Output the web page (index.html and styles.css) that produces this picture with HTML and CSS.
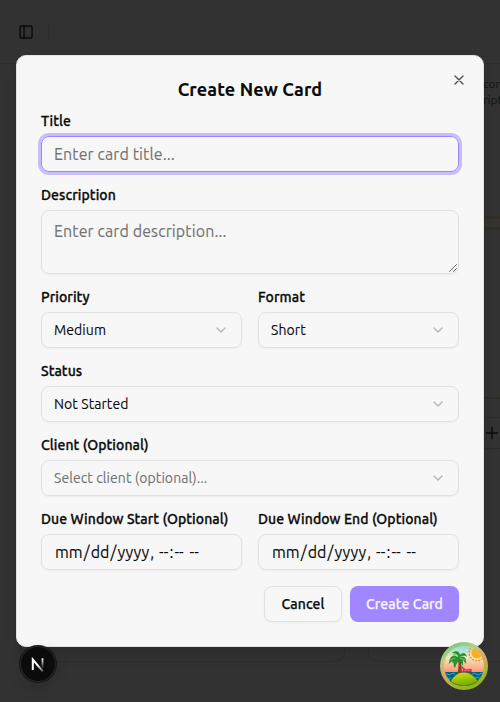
FILE: index.html
```html
<!DOCTYPE html>
<html lang="en">
<head>
<meta charset="utf-8">
<title>Create New Card</title>
<link rel="stylesheet" href="styles.css">
</head>
<body>
<div class="page" aria-hidden="true">
  <header class="topbar">
    <svg class="panel-icon" viewBox="0 0 24 24"><rect x="3" y="3" width="18" height="18" rx="2"/><path d="M9 3v18"/></svg>
    <span class="divider"></span>
  </header>
  <div class="column column-a"></div>
  <div class="column column-b"></div>
  <div class="side-text">con<br>ript</div>
  <div class="band"></div>
  <div class="rule"></div>
  <div class="add-row"><svg viewBox="0 0 16 16"><path d="M8 2.5v11M2.5 8h11"/></svg></div>
</div>
<main class="dialog">
  <svg class="close" viewBox="0 0 24 24"><path d="M18 6 6 18M6 6l12 12"/></svg>
  <h1>Create New Card</h1>
  <div class="field">
    <label>Title</label>
    <div class="control focused large">Enter card title...</div>
  </div>
  <div class="field">
    <label>Description</label>
    <div class="control area large">Enter card description...
      <svg class="grip" viewBox="0 0 8 8"><path d="M.5 7.5l7-7M4.5 7.5l3-3"/></svg>
    </div>
  </div>
  <div class="row">
    <div class="field">
      <label>Priority</label>
      <div class="control">Medium<svg class="chevron" viewBox="0 0 24 24"><path d="m6 9 6 6 6-6"/></svg></div>
    </div>
    <div class="field">
      <label>Format</label>
      <div class="control">Short<svg class="chevron" viewBox="0 0 24 24"><path d="m6 9 6 6 6-6"/></svg></div>
    </div>
  </div>
  <div class="field">
    <label>Status</label>
    <div class="control">Not Started<svg class="chevron" viewBox="0 0 24 24"><path d="m6 9 6 6 6-6"/></svg></div>
  </div>
  <div class="field">
    <label>Client (Optional)</label>
    <div class="control muted">Select client (optional)...<svg class="chevron" viewBox="0 0 24 24"><path d="m6 9 6 6 6-6"/></svg></div>
  </div>
  <div class="row">
    <div class="field">
      <label>Due Window Start (Optional)</label>
      <div class="control date"><div><span>mm</span>/<span>dd</span>/<span>yyyy</span>, <span>--</span>:<span>--</span> <span>--</span></div></div>
    </div>
    <div class="field">
      <label>Due Window End (Optional)</label>
      <div class="control date"><div><span>mm</span>/<span>dd</span>/<span>yyyy</span>, <span>--</span>:<span>--</span> <span>--</span></div></div>
    </div>
  </div>
  <div class="actions">
    <button class="cancel">Cancel</button>
    <button class="create">Create Card</button>
  </div>
</main>
<div class="next-badge">
  <svg viewBox="0 0 36 36">
    <defs>
      <linearGradient id="stem" x1="0" y1="0" x2="0" y2="1"><stop offset="0" stop-color="#fff"/><stop offset="1" stop-color="#fff" stop-opacity="0"/></linearGradient>
      <linearGradient id="slash" gradientUnits="userSpaceOnUse" x1="19" y1="18" x2="25" y2="26"><stop offset="0" stop-color="#fff"/><stop offset="1" stop-color="#fff" stop-opacity=".15"/></linearGradient>
    </defs>
    <path d="M12.8 24V13.6L22.8 25.4" fill="none" stroke="url(#slash)" stroke-width="2"/>
    <rect x="21.6" y="12.3" width="1.8" height="10.5" fill="url(#stem)"/>
  </svg>
</div>
<div class="island">
  <svg viewBox="0 0 48 48">
    <defs>
      <linearGradient id="ring" x1=".2" y1="0" x2=".65" y2="1"><stop offset="0" stop-color="#68c979"/><stop offset=".25" stop-color="#b5cf7e"/><stop offset=".5" stop-color="#dca66c"/><stop offset=".75" stop-color="#b0b43a"/><stop offset="1" stop-color="#86b51d"/></linearGradient>
      <linearGradient id="sky" x1="0" y1="0" x2="0" y2="1"><stop offset=".06" stop-color="#82dce9"/><stop offset=".32" stop-color="#f5e6bd"/><stop offset=".52" stop-color="#ffb48d"/><stop offset=".72" stop-color="#ff7075"/></linearGradient>
      <linearGradient id="sand" x1=".2" y1="0" x2=".6" y2="1"><stop offset="0" stop-color="#dce000"/><stop offset="1" stop-color="#67a800"/></linearGradient>
      <clipPath id="scene"><circle cx="24" cy="24" r="20"/></clipPath>
    </defs>
    <circle cx="24" cy="24" r="24" fill="url(#ring)"/>
    <g clip-path="url(#scene)">
      <path d="M0 0h48v48H0z" fill="url(#sky)"/>
      <circle cx="37" cy="10.8" r="5.6" fill="#ffad19"/>
      <circle cx="37" cy="10.8" r="8" fill="none" stroke="#f58a23" stroke-width="1.3" stroke-dasharray="1 2.2"/>
      <path d="M0 30h48v18H0z" fill="#075f7c"/>
      <path d="M3 32q2-2 4 0t4 0 4 0M32 32q2-2 4 0t4 0 4 0M3 36q2-2 4 0t4 0M35 36q2-2 4 0t4 0" fill="none" stroke="#1bb8c9" stroke-width="1"/>
      <path d="M17 32c2-6 2-11 0-17l3-1c1 7 2 12 2 18z" fill="#8a451d"/>
      <path d="M17.8 15C13 11 9 15 9 22l3-3 1 3 3-5c-3 5-3 7-1 9 1-4 3-6 4-8l4 6v-6l3 4c1-6-2-9-6-7 4-2 6-1 7 0-1-5-5-5-7-2 0-4-5-5-8-2 3 0 5 1 6 3z" fill="#249236"/>
      <path d="m10 18 5-2m2-3-4-1m7 4 5 2" stroke="#74c83c" stroke-width="1" fill="none"/>
      <path d="m22 25 3 3 6-.4v2h-8m0 0 1-2" stroke="#dc195d" stroke-width="1.2" fill="none"/>
      <path d="M9 44c3-9 8-13.5 15-13.5S36 35 40 44z" fill="url(#sand)"/>
    </g>
    <path d="M10 39c7 6 21 6 28 0" fill="none" stroke="#4e6c16" stroke-dasharray="1 1" stroke-width=".8"/>
  </svg>
</div>
</body>
</html>
```
FILE: styles.css
```css
* { box-sizing: border-box; }
html { overflow: hidden; }
body {
  margin: 0;
  width: 500px;
  height: 702px;
  overflow: hidden;
  position: relative;
  background: #323232;
  color: #0a0a0a;
  font-family: Ubuntu, "Noto Sans", sans-serif;
  font-size: 14px;
  letter-spacing: .08px;
  -webkit-text-stroke: .1px currentColor;
}
svg { display: block; fill: none; stroke-linecap: round; stroke-linejoin: round; }
.page { position: relative; width: 500px; height: 702px; overflow: hidden; }
.topbar {
  height: 64px;
  padding-left: 18px;
  display: flex;
  align-items: center;
  gap: 14px;
  border-bottom: 1px solid #2d2d2d;
}
.panel-icon { width: 16px; height: 16px; stroke: #090909; stroke-width: 2; }
.divider { width: 1px; height: 16px; background: #2d2d2d; }
.side-text { position: absolute; left: 483px; top: 76px; width: 17px; overflow: hidden; color: #161616; font-size: 12px; line-height: 16px; letter-spacing: 0; white-space: nowrap; }
.band { position: absolute; left: 484px; right: 0; top: 216px; height: 14px; background: #343331; border: solid #302e25; border-width: 3px 0; }
.rule { position: absolute; left: 484px; right: 0; top: 397px; height: 2px; background: #2d2c25; }
.add-row { position: absolute; left: 484px; right: 0; top: 417px; height: 32px; border: dashed #292929; border-width: 1px 0; }
.add-row svg { width: 16px; height: 16px; margin-top: 7px; stroke: #0b0b0b; stroke-width: 1.5; }
.column { position: absolute; top: 100px; height: 562px; border: 1px solid #2b2c2e; border-top: 0; border-radius: 0 0 10px 10px; }
.column-a { left: 20px; width: 325px; }
.column-b { left: 368px; width: 160px; border-color: #2e2d2b; }
.dialog {
  position: absolute;
  left: 16px;
  top: 55px;
  width: 468px;
  height: 592px;
  padding: 24px;
  border: 1px solid #e2e2e2;
  border-radius: 10px;
  background: #f7f7f7;
  box-shadow: 0 10px 15px -3px rgba(0, 0, 0, .1), 0 4px 6px -4px rgba(0, 0, 0, .1);
  display: flex;
  flex-direction: column;
  gap: 16px;
}
.close { position: absolute; right: 16px; top: 16px; width: 16px; height: 16px; stroke: #4e4e4e; stroke-width: 2; }
h1 { margin: 0; height: 18px; display: flex; justify-content: center; align-items: center; font-size: 18px; line-height: 18px; font-weight: 600; letter-spacing: .13px; white-space: nowrap; }
.field { display: flex; flex-direction: column; gap: 8px; min-width: 0; }
.row { display: grid; grid-template-columns: 1fr 1fr; gap: 16px; }
label { height: 14px; line-height: 14px; font-weight: 500; white-space: nowrap; -webkit-text-stroke-width: .3px; }
.control {
  height: 36px;
  padding: 0 12px;
  border: 1px solid #e2e2e2;
  border-radius: 8px;
  box-shadow: 0 1px 2px rgba(0, 0, 0, .05);
  display: flex;
  align-items: center;
  justify-content: space-between;
  white-space: nowrap;
  line-height: 20px;
}
.large { font-size: 16px; line-height: 24px; letter-spacing: .1px; color: #737373; }
.muted { color: #737373; }
.focused { border-color: #9f84ff; box-shadow: 0 0 0 3px #cabdfb; }
.area { position: relative; height: 64px; padding-top: 8px; align-items: flex-start; }
.grip { position: absolute; right: 1px; bottom: 1px; width: 8px; height: 8px; stroke: #444; stroke-width: .8; }
.chevron { width: 16px; height: 16px; stroke: #b6b6b6; stroke-width: 2; }
.date { font-size: 16px; letter-spacing: .05px; }
.date span { padding: 0 1px; }
.actions { display: flex; justify-content: flex-end; gap: 8px; }
button { height: 36px; padding: 0; border: 0; border-radius: 8px; font: 500 14px Ubuntu, "Noto Sans", sans-serif; letter-spacing: .08px; white-space: nowrap; -webkit-text-stroke: .25px currentColor; }
.cancel { width: 78px; border: 1px solid #e2e2e2; background: #f7f7f7; color: #0a0a0a; box-shadow: 0 1px 2px rgba(0, 0, 0, .05); }
.create { width: 109px; background: #a086ff; color: #f8f5ff; }
.next-badge { position: absolute; left: 20px; top: 646px; width: 36px; height: 36px; border-radius: 50%; background: #0b0b0b; box-shadow: inset 0 0 0 1px #292929, 0 0 0 1px #171717, 0 6px 16px rgba(0, 0, 0, .12); }
.next-badge svg { stroke-linecap: butt; stroke-linejoin: miter; }
.island { position: absolute; left: 440px; top: 642px; width: 48px; height: 48px; }
```
